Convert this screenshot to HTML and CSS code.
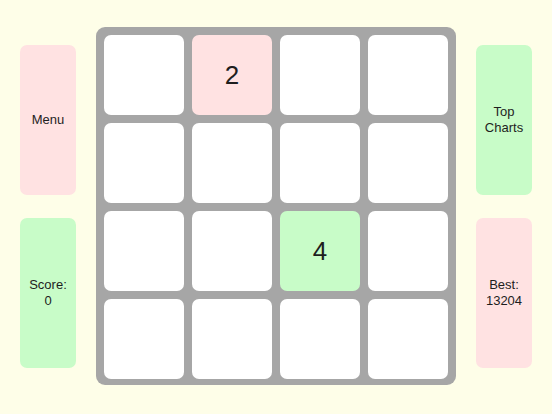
FILE: index.html
```html
<!DOCTYPE html>
<html>
<head>
<meta charset="utf-8">
<link rel="stylesheet" href="styles.css">
</head>
<body>
<div class="app">
  <div class="side">
    <div class="btn pink">Menu</div>
    <div class="btn green">Score:<br>0</div>
  </div>
  <div class="board">
    <div class="tile"></div>
    <div class="tile pink">2</div>
    <div class="tile"></div>
    <div class="tile"></div>
    <div class="tile"></div>
    <div class="tile"></div>
    <div class="tile"></div>
    <div class="tile"></div>
    <div class="tile"></div>
    <div class="tile"></div>
    <div class="tile green">4</div>
    <div class="tile"></div>
    <div class="tile"></div>
    <div class="tile"></div>
    <div class="tile"></div>
    <div class="tile"></div>
  </div>
  <div class="side">
    <div class="btn green">Top<br>Charts</div>
    <div class="btn pink">Best:<br>13204</div>
  </div>
</div>
</body>
</html>
```
FILE: styles.css
```css
html, body {
  margin: 0;
  padding: 0;
  background: #fefee8;
  width: 552px;
  height: 414px;
  overflow: hidden;
  font-family: "Liberation Sans", Arial, sans-serif;
  color: #1e1e1e;
}
.app {
  display: flex;
  align-items: center;
  gap: 20px;
  padding: 27px 20px 0 20px;
}
.side {
  width: 56px;
  display: flex;
  flex-direction: column;
  gap: 23px;
}
.btn {
  height: 150px;
  border-radius: 7px;
  display: flex;
  align-items: center;
  justify-content: center;
  text-align: center;
  font-size: 13px;
  line-height: 16px;
}
.pink { background: #ffe2e2; }
.green { background: #c8fcc8; }
.board {
  width: 360px;
  height: 358px;
  box-sizing: border-box;
  background: #a6a6a6;
  border-radius: 9px;
  padding: 8px 8px 6px 8px;
  display: grid;
  grid-template-columns: repeat(4, 80px);
  grid-template-rows: repeat(4, 1fr);
  gap: 8px;
}
.tile {
  background: #ffffff;
  border-radius: 7px;
  display: flex;
  align-items: center;
  justify-content: center;
  font-size: 26px;
}
.tile.pink { background: #ffe2e2; }
.tile.green { background: #c8fcc8; }
```
